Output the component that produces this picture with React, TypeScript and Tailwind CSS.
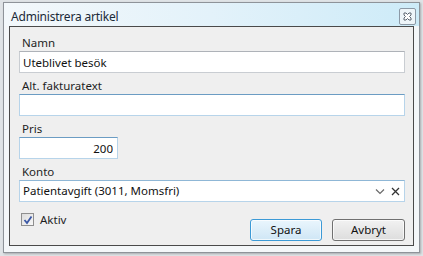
import { useState } from 'react';

const font = { fontFamily: '"Noto Sans", "Open Sans", sans-serif' };

function Field({ label, children }: { label: string; children: React.ReactNode }) {
  return (
    <div className="flex flex-col">
      <label className="text-[11.5px] leading-[12px] pl-[3px] mb-[2px] text-[#1e1e1e]">{label}</label>
      {children}
    </div>
  );
}

export default function App() {
  const [aktiv, setAktiv] = useState(true);

  return (
    <div className="w-[423px] h-[256px] bg-[#dfe3e6] overflow-hidden" style={font}>
      <div className="ml-[3px] mt-[2px] w-[417px] h-[251px] border border-[#8e9399] bg-[#f4f7f9] flex flex-col shadow-[1px_1px_2px_rgba(0,0,0,0.25)]">
        {/* title bar */}
        <div className="h-[23px] flex items-center justify-between pl-[7px] pr-[3px] bg-gradient-to-r from-[#f3f8fb] via-[#e3f2fa] to-[#cdebf8]">
          <span className="text-[12px] tracking-[-0.2px] text-[#1b2a38] pt-[4px]">Administrera artikel</span>
          <button className="w-[17px] h-[17px] mt-[3px] rounded-[2px] border border-[#8c99a6] bg-[#eef5f9] flex items-center justify-center">
            <svg width="9" height="9" viewBox="0 0 9 9">
              <path d="M1 1h2l1.5 1.5L6 1h2v2L6.5 4.5 8 6v2H6L4.5 6.5 3 8H1V6l1.5-1.5L1 3z" fill="#fff" stroke="#5a6470" strokeWidth="1" />
            </svg>
          </button>
        </div>

        {/* content */}
        <div className="mx-[5px] mb-[6px] flex-1 border border-[#4a4a4a] bg-[#efefef] pl-[9px] pr-[8px] pt-[10px] flex flex-col gap-[7px]">
          <Field label="Namn">
            <input
              defaultValue="Uteblivet besök"
              className="h-[22px] w-full bg-white border border-[#c9cdd2] border-t-[#aeb2b8] px-[3px] text-[11.5px] text-[#111] outline-none"
            />
          </Field>
          <Field label="Alt. fakturatext">
            <input className="h-[22px] w-full bg-white border border-[#b7d4ea] border-t-[#6b9cc3] px-[3px] text-[11.5px] outline-none" />
          </Field>
          <Field label="Pris">
            <input
              defaultValue="200"
              className="h-[22px] w-[99px] bg-white border border-[#b7d4ea] border-t-[#6b9cc3] px-[4px] text-[11.5px] text-right text-[#111] outline-none"
            />
          </Field>
          <Field label="Konto">
            <div className="h-[22px] w-full bg-white border border-[#b7d4ea] border-t-[#8fb7d6] flex items-center pl-[3px] pr-[4px]">
              <span className="flex-1 text-[11.5px] text-[#111]">Patientavgift (3011, Momsfri)</span>
              <svg width="10" height="7" viewBox="0 0 10 7" className="mr-[6px]">
                <path d="M1 1.5l4 4 4-4" fill="none" stroke="#6a6a6a" strokeWidth="1.2" />
              </svg>
              <svg width="9" height="9" viewBox="0 0 9 9">
                <path d="M1 1l7 7M8 1L1 8" fill="none" stroke="#333" strokeWidth="1.3" />
              </svg>
            </div>
          </Field>

          <div className="flex items-start justify-between mt-[2px]">
            <label className="flex items-center gap-[6px] ml-[2px] cursor-pointer">
              <span
                onClick={() => setAktiv(!aktiv)}
                className="w-[13px] h-[13px] border border-[#8f8f8f] bg-gradient-to-br from-[#dcdcdc] to-[#f8f8f8] flex items-center justify-center"
              >
                {aktiv && (
                  <svg width="10" height="10" viewBox="0 0 10 10">
                    <path d="M1.5 5l2.5 3L8.5 1.5" fill="none" stroke="#3a57a5" strokeWidth="1.8" />
                  </svg>
                )}
              </span>
              <span className="text-[11.5px] text-[#1e1e1e]">Aktiv</span>
            </label>
            <div className="flex gap-[10px] mt-[8px]">
              <button className="w-[72px] h-[22px] rounded-[3px] border border-[#3c9ad6] bg-gradient-to-b from-[#eaf6fd] to-[#cfe6f5] text-[11.5px] text-[#111] shadow-[inset_0_0_0_1px_rgba(255,255,255,0.7)]">
                Spara
              </button>
              <button className="w-[73px] h-[22px] rounded-[3px] border border-[#707070] bg-gradient-to-b from-[#f2f2f2] to-[#dddddd] text-[11.5px] text-[#111] shadow-[inset_0_0_0_1px_rgba(255,255,255,0.7)]">
                Avbryt
              </button>
            </div>
          </div>
        </div>
      </div>
    </div>
  );
}
